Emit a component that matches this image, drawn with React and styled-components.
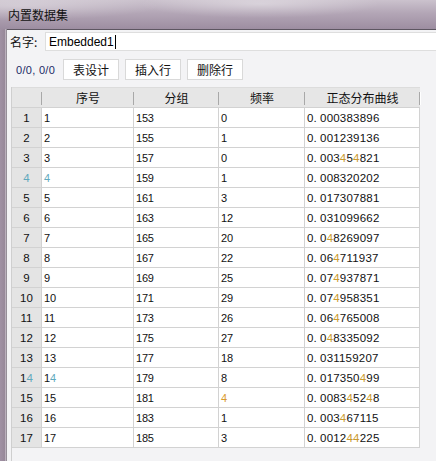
import React from "react";
import styled, { createGlobalStyle } from "styled-components";

const GlobalStyle = createGlobalStyle`
  html, body {
    margin: 0;
    padding: 0;
    width: 436px;
    height: 461px;
    overflow: hidden;
    background: #f3f3f5;
  }
`;

const cjk = `"Noto Sans CJK SC", "Liberation Sans", sans-serif`;
const latin = `"Liberation Sans", "Noto Sans CJK SC", sans-serif`;

const Window = styled.div`
  display: flex;
  flex-direction: column;
  width: 436px;
  height: 461px;
  background: linear-gradient(180deg, #c6bcc8 0%, #ab9daf 30%, #a192a5 100%);
`;

const TitleBar = styled.div`
  height: 29px;
  flex-shrink: 0;
  display: flex;
  align-items: center;
  padding-left: 8px;
  font-family: ${cjk};
  font-size: 12px;
  color: #111;
  background: radial-gradient(ellipse 120px 14px at 260px 4px, rgba(255,255,255,0.35), transparent),
    radial-gradient(ellipse 140px 14px at 20px 6px, rgba(255,255,255,0.3), transparent),
    linear-gradient(180deg, #cbc2cd 0%, #b3a6b6 45%, #9d8ea1 100%);
`;

const Body = styled.div`
  flex: 1;
  display: flex;
  min-height: 0;
`;

const FrameEdge = styled.div`
  width: 7px;
  flex-shrink: 0;
  background: linear-gradient(90deg, #a091a4 0%, #978899 70%, #d6cfd8 85%, #5c5560 100%);
`;

const Client = styled.div`
  flex: 1;
  display: flex;
  flex-direction: column;
  background: #f3f3f5;
  border-top: 1px solid #5d5661;
  min-width: 0;
`;

const NameRow = styled.div`
  height: 22px;
  display: flex;
  align-items: center;
  padding-left: 3px;
  background: #f3f3f5;
`;

const Label = styled.span`
  font-family: ${cjk};
  font-size: 12px;
  color: #111;
  width: 35px;
`;

const NameInput = styled.div`
  flex: 1;
  height: 19px;
  margin-top: 1px;
  box-sizing: border-box;
  border: 1px solid #dedede;
  border-right: none;
  background: #fff;
  display: flex;
  align-items: center;
  padding-left: 3px;
  font-family: ${latin};
  font-size: 12px;
  color: #000;
`;

const Caret = styled.span`
  display: inline-block;
  width: 1px;
  height: 14px;
  background: #000;
  margin-left: 1px;
`;

const Toolbar = styled.div`
  height: 35px;
  display: flex;
  align-items: center;
  gap: 6px;
  padding-left: 9px;
`;

const Counter = styled.span`
  font-family: ${latin};
  font-size: 11px;
  letter-spacing: 0.3px;
  color: #1c2b66;
  width: 41px;
`;

const ToolButton = styled.button`
  width: 56px;
  height: 21px;
  padding: 0;
  background: #fff;
  border: 1px solid #d9d9d9;
  font-family: ${cjk};
  font-size: 12px;
  color: #111;
`;

const GridArea = styled.div`
  flex: 1;
  margin-left: 4px;
  border-left: 1px solid #cfcfcf;
  background: #f3f3f5;
`;

const Table = styled.div`
  display: grid;
  grid-template-columns: 30px 92px 85px 86px 115px;
  width: 408px;
`;

const HeaderCell = styled.div`
  position: relative;
  height: 19px;
  border-top: 1px solid #dcdcdc;
  background: #e6e6e6;
  font-family: ${cjk};
  font-size: 12px;
  color: #111;
  display: flex;
  align-items: center;
  justify-content: center;
  &::after {
    content: "";
    position: absolute;
    right: 0;
    top: 4px;
    height: 13px;
    width: 1px;
    background: #a8a8a8;
    box-shadow: 1px 0 0 #fff;
  }
`;

const RowHead = styled.div`
  height: 19px;
  background: #e4e4e4;
  border-top: 1px solid #d2d2d2;
  border-right: 1px solid #d2d2d2;
  font-family: ${latin};
  font-size: 11.5px;
  color: #111;
  display: flex;
  align-items: center;
  justify-content: center;
  ${(p) => p.$last && "border-bottom: 1px solid #d2d2d2;"}
`;

const Cell = styled.div`
  height: 19px;
  background: #fff;
  border-top: 1px solid #d2d2d2;
  border-right: 1px solid #d2d2d2;
  padding-left: 2px;
  font-family: ${latin};
  font-size: ${(p) => (p.$wide ? "11.5px" : "11px")};
  letter-spacing: ${(p) => (p.$wide ? "0.2px" : "-0.2px")};
  color: #111;
  display: flex;
  align-items: center;
  white-space: nowrap;
  overflow: hidden;
  ${(p) => p.$last && "border-bottom: 1px solid #d2d2d2;"}
`;

const Tint = styled.span`
  color: ${(p) => p.$c};
`;

const Dot = styled.span`
  margin-right: 3px;
`;

const rows = [
  [1, 153, 0, "0.000383896"],
  [2, 155, 1, "0.001239136"],
  [3, 157, 0, "0.003454821"],
  [4, 159, 1, "0.008320202"],
  [5, 161, 3, "0.017307881"],
  [6, 163, 12, "0.031099662"],
  [7, 165, 20, "0.048269097"],
  [8, 167, 22, "0.064711937"],
  [9, 169, 25, "0.074937871"],
  [10, 171, 29, "0.074958351"],
  [11, 173, 26, "0.064765008"],
  [12, 175, 27, "0.048335092"],
  [13, 177, 18, "0.031159207"],
  [14, 179, 8, "0.017350499"],
  [15, 181, 4, "0.008345248"],
  [16, 183, 1, "0.003467115"],
  [17, 185, 3, "0.001244225"],
];

// ClearType made some glyphs look coloured in the screenshot
const Digits = ({ text, four }) =>
  String(text)
    .split("")
    .map((ch, i) =>
      ch === "4" ? (
        <Tint key={i} $c={four}>
          4
        </Tint>
      ) : (
        ch
      )
    );

const Decimal = ({ value }) => {
  const [a, b] = value.split(".");
  return (
    <>
      {a}
      <Dot>.</Dot>
      <Digits text={b} four="#c99a2e" />
    </>
  );
};

const columns = ["序号", "分组", "频率", "正态分布曲线"];

export default function App() {
  return (
    <>
      <GlobalStyle />
      <Window>
        <TitleBar>内置数据集</TitleBar>
        <Body>
          <FrameEdge />
          <Client>
            <NameRow>
              <Label>名字:</Label>
              <NameInput>
                Embedded1
                <Caret />
              </NameInput>
            </NameRow>
            <Toolbar>
              <Counter>0/0, 0/0</Counter>
              <ToolButton>表设计</ToolButton>
              <ToolButton>插入行</ToolButton>
              <ToolButton>删除行</ToolButton>
            </Toolbar>
            <GridArea>
              <Table>
                <HeaderCell />
                {columns.map((c) => (
                  <HeaderCell key={c}>{c}</HeaderCell>
                ))}
                {rows.map((r, i) => {
                  const last = i === rows.length - 1;
                  return (
                    <React.Fragment key={r[0]}>
                      <RowHead $last={last}>
                        <Digits text={r[0]} four="#5fa9bd" />
                      </RowHead>
                      <Cell $last={last}>
                        <Digits text={r[0]} four="#5fa9bd" />
                      </Cell>
                      <Cell $last={last}>{r[1]}</Cell>
                      <Cell $last={last}>
                        <Digits text={r[2]} four="#d99a2c" />
                      </Cell>
                      <Cell $last={last} $wide>
                        <Decimal value={r[3]} />
                      </Cell>
                    </React.Fragment>
                  );
                })}
              </Table>
            </GridArea>
          </Client>
        </Body>
      </Window>
    </>
  );
}
